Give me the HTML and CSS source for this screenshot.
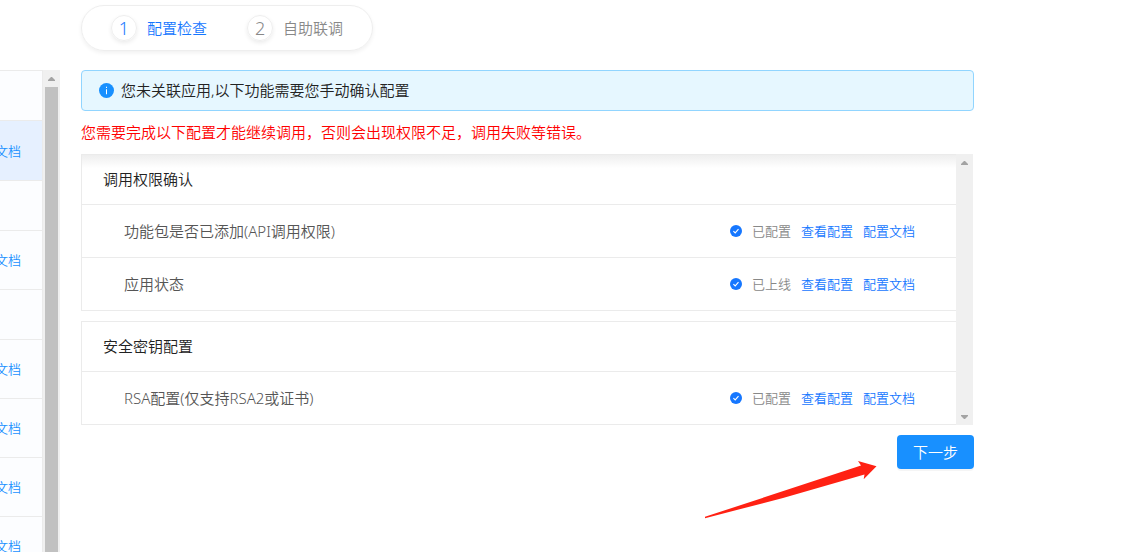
FILE: index.html
```html
<!DOCTYPE html>
<html lang="zh-CN">
<head>
<meta charset="utf-8">
<meta name="viewport" content="width=device-width, initial-scale=1">
<title>配置检查</title>
<link rel="stylesheet" href="styles.css">
</head>
<body>
<svg class="defs" aria-hidden="true">
  <symbol id="check" viewBox="0 0 12 12">
    <circle cx="6" cy="6" r="6" fill="#1677ff"/>
    <path d="M3.4 6.1 5.2 7.9 8.5 4.2" fill="none" stroke="#fff" stroke-width="1.1"/>
  </symbol>
  <symbol id="up" viewBox="0 0 7 4"><path d="M3 0h1L7 3v1H0V3z" fill="#a3a3a3"/></symbol>
  <symbol id="down" viewBox="0 0 7 4"><path d="M3 4h1L7 1V0H0v1z" fill="#a3a3a3"/></symbol>
</svg>
<div class="page">
  <aside class="sidebar">
    <ul class="api-list">
      <li class="api-group"></li>
      <li class="api-item active"><a href="#">文档</a></li>
      <li class="api-group"></li>
      <li class="api-item"><a href="#">文档</a></li>
      <li class="api-group"></li>
      <li class="api-item"><a href="#">文档</a></li>
      <li class="api-item"><a href="#">文档</a></li>
      <li class="api-item"><a href="#">文档</a></li>
      <li class="api-item"><a href="#">文档</a></li>
    </ul>
    <div class="scrollbar" aria-hidden="true">
      <svg class="arrow"><use href="#up"/></svg>
      <div class="thumb"></div>
    </div>
  </aside>
  <main class="main">
    <ol class="steps">
      <li class="step current"><span class="num">1</span>配置检查</li>
      <li class="step"><span class="num">2</span>自助联调</li>
    </ol>
    <div class="alert" role="status">
      <svg class="info" viewBox="0 0 15 15" aria-hidden="true">
        <circle cx="7.5" cy="7.5" r="7.5" fill="#1890ff"/>
        <path d="M7 6.3h1v5H7zM7 3.8h1v1.3H7z" fill="#fff"/>
      </svg>
      <span>您未关联应用,以下功能需要您手动确认配置</span>
    </div>
    <p class="warning">您需要完成以下配置才能继续调用，否则会出现权限不足，调用失败等错误。</p>
    <div class="checks">
      <div class="panels">
        <section class="panel">
          <h2 class="panel-title">调用权限确认</h2>
          <div class="row">
            <span class="name">功能包是否已添加(API调用权限)</span>
            <svg class="ok" aria-hidden="true"><use href="#check"/></svg>
            <span class="state">已配置</span>
            <a href="#">查看配置</a>
            <a href="#">配置文档</a>
          </div>
          <div class="row">
            <span class="name">应用状态</span>
            <svg class="ok" aria-hidden="true"><use href="#check"/></svg>
            <span class="state">已上线</span>
            <a href="#">查看配置</a>
            <a href="#">配置文档</a>
          </div>
        </section>
        <section class="panel">
          <h2 class="panel-title">安全密钥配置</h2>
          <div class="row">
            <span class="name">RSA配置(仅支持RSA2或证书)</span>
            <svg class="ok" aria-hidden="true"><use href="#check"/></svg>
            <span class="state">已配置</span>
            <a href="#">查看配置</a>
            <a href="#">配置文档</a>
          </div>
        </section>
      </div>
      <div class="scrollbar" aria-hidden="true">
        <svg class="arrow"><use href="#up"/></svg>
        <svg class="arrow"><use href="#down"/></svg>
      </div>
    </div>
    <div class="actions">
      <button class="next" type="button">下一步</button>
      <svg class="pointer" viewBox="0 0 172 58" aria-hidden="true">
        <path d="M0 55.800 156 4.600 153 0 171.500 5.300 158.700 18.200 159.500 13.400 78 37 0 57.200z" fill="#ff2113"/>
      </svg>
    </div>
  </main>
</div>
</body>
</html>
```

FILE: styles.css
```css
* {
  box-sizing: border-box;
}

body {
  margin: 0;
  background: #fff;
  color: #222;
  font: 350 15px/22px "Noto Sans", "Noto Sans CJK SC", sans-serif;
}

ul,
ol,
p,
h2 {
  margin: 0;
  padding: 0;
  list-style: none;
  font-size: 15px;
  font-weight: inherit;
}

a {
  color: #1677ff;
  text-decoration: none;
}

.defs {
  display: none;
}

.page {
  display: flex;
  height: 100vh;
  overflow: hidden;
}

.sidebar {
  display: flex;
  flex: none;
  margin-top: 70px;
  overflow: hidden;
}

.api-list {
  width: 43px;
  border-top: 1px solid #ebebeb;
  border-right: 1px solid #ebebeb;
  background: #fcfdff;
}

.api-group,
.api-item {
  display: flex;
  align-items: center;
  justify-content: flex-end;
  padding-right: 21px;
  border-bottom: 1px solid #ebebeb;
  font-size: 13px;
  white-space: nowrap;
}

.api-group {
  height: 50px;
}

.api-item {
  height: 59px;
}

.api-item.active {
  height: 60px;
  background: #e6f0ff;
}

.api-item a {
  color: #1890ff;
}

.scrollbar {
  display: flex;
  flex: none;
  flex-direction: column;
  justify-content: space-between;
  align-items: center;
  width: 17px;
  background: #f0f0f0;
}

.arrow {
  flex: none;
  width: 7px;
  height: 4px;
  margin: 7px 0 6px;
}

.thumb {
  flex: 1;
  width: 13px;
  background: #c1c1c1;
}

.main {
  flex: 1;
  min-width: 0;
  padding: 5px 162px 0 21px;
}

.steps {
  display: flex;
  gap: 40px;
  width: fit-content;
  padding: 9px 29px;
  border: 1px solid #eee;
  border-radius: 23px;
  box-shadow: 0 2px 4px rgba(0, 0, 0, 0.06);
}

.step {
  display: flex;
  align-items: center;
  gap: 10px;
  color: #888;
}

.num {
  width: 26px;
  height: 26px;
  border: 1px solid #eee;
  border-radius: 50%;
  box-shadow: 0 2px 4px rgba(0, 0, 0, 0.08);
  font-size: 18px;
  line-height: 24px;
  text-align: center;
}

.step.current {
  color: #1677ff;
}

.alert {
  display: flex;
  align-items: center;
  gap: 7px;
  min-height: 41px;
  margin-top: 19px;
  padding: 0 17px 1px;
  border: 1px solid #91d5ff;
  border-radius: 4px;
  background: #e6f7ff;
}

.info {
  width: 15px;
  height: 15px;
}

.warning {
  padding: 10px 0 11px;
  color: #f00;
}

.checks {
  display: flex;
  margin-right: 1px;
}

.panels {
  display: flex;
  flex: 1;
  flex-direction: column;
  gap: 10px;
  background: linear-gradient(#ededed, #fff 14px);
}

.panel {
  border: 1px solid #ebebeb;
  border-right: 0;
}

.panel + .panel {
  background: #fff;
}

.panel-title {
  padding: 13px 21px 14px;
}

.row {
  display: flex;
  align-items: center;
  gap: 10px;
  min-height: 53px;
  padding: 0 41px 1px 42px;
  border-top: 1px solid #ebebeb;
  color: #555;
  font-size: 13px;
}

.name {
  flex: 1;
  font-size: 15px;
}

.ok {
  width: 12px;
  height: 12px;
}

.state {
  color: #888;
}

.actions {
  position: relative;
  display: flex;
  justify-content: flex-end;
  padding-top: 10px;
}

.next {
  height: 34px;
  padding: 0 16px;
  border: 0;
  border-radius: 4px;
  background: #1890ff;
  box-shadow: 0 2px 0 rgba(0, 0, 0, 0.04);
  color: #fff;
  font: inherit;
}

.pointer {
  position: absolute;
  top: 36px;
  right: 97px;
  width: 172px;
  height: 58px;
}
```
